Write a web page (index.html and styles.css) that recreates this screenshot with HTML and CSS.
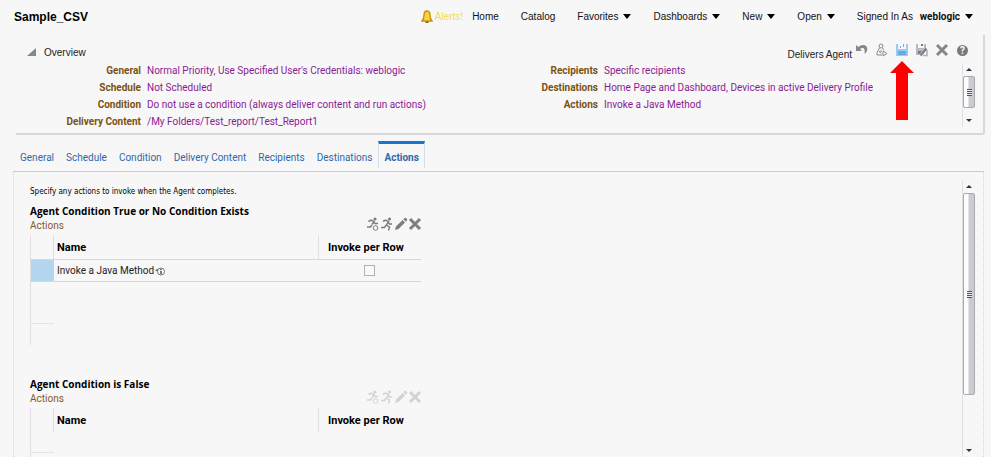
FILE: index.html
```
<!DOCTYPE html>
<html lang="en">
<head>
  <meta charset="UTF-8" />
  <meta name="viewport" content="width=device-width, initial-scale=1.0"/>
  <title>Sample_CSV</title>
  <link rel="stylesheet" href="styles.css">
</head>
<body>

  <svg class="sprite" width="0" height="0" aria-hidden="true">
    <symbol id="i-run" viewBox="0 0 14 14">
      <circle cx="9.5" cy="2" r="1.6" fill="currentColor"/>
      <path d="M3 4.5L5.5 3L8.5 4.5L6.5 8L9.5 10L8.5 13.5M8 5L9.5 7H12M6.3 8L4.5 10.5H1" fill="none" stroke="currentColor" stroke-width="1.5"/>
    </symbol>
    <symbol id="i-run-if" viewBox="0 0 14 14">
      <circle cx="9" cy="2" r="1.6" fill="currentColor"/>
      <path d="M2.5 4.5L5 3L8 4.5L6 7.5M7.5 5L9 6.5H12M5.8 8L4.5 10H1" fill="none" stroke="currentColor" stroke-width="1.5"/>
      <circle cx="9.5" cy="11" r="2.3" fill="none" stroke="currentColor"/>
    </symbol>
    <symbol id="i-edit" viewBox="0 0 14 14">
      <path d="M1 13L2 9.5L8.5 3L11 5.5L4.5 12ZM9.3 2.3L10.5 1Q11.5 .5 12.7 1.5Q13.6 2.6 13 3.5L11.8 4.8Z" fill="currentColor"/>
    </symbol>
    <symbol id="i-close" viewBox="0 0 14 14">
      <path d="M2 2L12 12M12 2L2 12" stroke="currentColor" stroke-width="3"/>
    </symbol>
  </svg>

  <header class="topbar">
    <h1>Sample_CSV</h1>
    <nav class="menu">
      <a class="alerts" href="#">
        <svg width="12" height="14" viewBox="0 0 12 14"><path d="M6 1C3.6 1 3 3 3 5.5C3 8 2.5 9.3 1 11H11C9.5 9.3 9 8 9 5.5C9 3 8.400 1 6 1Z" fill="#fbd438" stroke="#c8900c" stroke-width="1.4"/><path d="M4.500 11.500H7.500V13H4.500Z" fill="#8a5a10"/></svg>
        Alerts!
      </a>
      <a href="#">Home</a>
      <a href="#">Catalog</a>
      <button type="button" class="drop">Favorites</button>
      <button type="button" class="drop">Dashboards</button>
      <button type="button" class="drop">New</button>
      <button type="button" class="drop">Open</button>
      <span class="user">Signed In As <button type="button" class="drop">weblogic</button></span>
    </nav>
  </header>

  <section class="overview">
    <div class="overview-head">
      <h2><button type="button" class="toggle">Overview</button></h2>
      <div class="toolbar">
        <span>Delivers Agent</span>
        <button type="button" aria-label="Undo">
          <svg width="14" height="14" viewBox="0 0 14 14"><path d="M1 2V8H7L5 6C8 4 10.500 5 9.500 11C14 8 13 1.500 7.500 2Q5 2.300 3.200 4Z" fill="#85878c"/></svg>
        </button>
        <button type="button" aria-label="Run agent">
          <svg width="14" height="14" viewBox="0 0 14 14" fill="none" stroke="#85878c"><circle cx="6" cy="3" r="2"/><path d="M4.500 5L2 9.500V12H7M7.500 5L9 7M4 8L6 10.500M6 7V9"/><path d="M8 8L12 10.500L8 13Z"/></svg>
        </button>
        <button type="button" class="save" aria-label="Save">
          <svg width="14" height="14" viewBox="0 0 14 14"><path d="M1 1H3V6H11V1H13V13H1Z" fill="#9cc9ef"/><path d="M5 3H6V5H5ZM8 1H9V4H8Z" fill="#7fa9cf"/><path d="M3 8H11V12H3Z" fill="#6aaae4"/></svg>
          <svg class="pointer" width="24" height="59" viewBox="0 0 24 59"><path d="M12 0L24 12H18V59H6V12H0Z" fill="#fe0000"/></svg>
        </button>
        <button type="button" aria-label="Save as">
          <svg width="14" height="14" viewBox="0 0 14 14"><path d="M1 1H3V5H9V1H11V5L5 12H1Z" fill="#b9babd"/><path d="M6 1H8V3H6ZM3 8H7L4 11H3Z" fill="#777a80"/><path d="M5.500 12.500L11.500 5.500" stroke="#777a80" stroke-width="2"/><path d="M8 12.500H12V7" fill="none" stroke="#b0b1b5" stroke-width="1.500"/></svg>
        </button>
        <button type="button" aria-label="Close"><svg width="14" height="14"><use href="#i-close"/></svg></button>
        <button type="button" class="help" aria-label="Help">?</button>
      </div>
    </div>
    <div class="overview-body">
      <dl>
        <dt>General</dt><dd>Normal Priority, Use Specified User's Credentials: weblogic</dd>
        <dt>Schedule</dt><dd>Not Scheduled</dd>
        <dt>Condition</dt><dd>Do not use a condition (always deliver content and run actions)</dd>
        <dt>Delivery Content</dt><dd>/My Folders/Test_report/Test_Report1</dd>
      </dl>
      <dl class="second">
        <dt>Recipients</dt><dd>Specific recipients</dd>
        <dt>Destinations</dt><dd>Home Page and Dashboard, Devices in active Delivery Profile</dd>
        <dt>Actions</dt><dd>Invoke a Java Method</dd>
      </dl>
      <div class="scrollbar"><i class="up"></i><i class="thumb"></i><i class="down"></i></div>
    </div>
  </section>

  <nav class="tabs">
    <a href="#">General</a>
    <a href="#">Schedule</a>
    <a href="#">Condition</a>
    <a href="#">Delivery Content</a>
    <a href="#">Recipients</a>
    <a href="#">Destinations</a>
    <a href="#" class="active">Actions</a>
  </nav>

  <main class="panel">
    <div class="content">
      <p>Specify any actions to invoke when the Agent completes.</p>

      <section class="group">
        <h3>Agent Condition True or No Condition Exists</h3>
        <div class="group-head">
          <span>Actions</span>
          <div class="icons">
            <button type="button" aria-label="Add conditional action"><svg width="14" height="14"><use href="#i-run-if"/></svg></button>
            <button type="button" aria-label="Add action"><svg width="14" height="14"><use href="#i-run"/></svg></button>
            <button type="button" aria-label="Edit"><svg width="14" height="14"><use href="#i-edit"/></svg></button>
            <button type="button" aria-label="Delete"><svg width="14" height="14"><use href="#i-close"/></svg></button>
          </div>
        </div>
        <table>
          <thead>
            <tr><th class="mark"></th><th>Name</th><th class="per-row">Invoke per Row</th></tr>
          </thead>
          <tbody>
            <tr class="selected">
              <td class="mark"></td>
              <td>Invoke a Java Method <svg class="info" width="10" height="11" viewBox="0 0 10 11"><path d="M0 4L3 3V6Z" fill="#555b66"/><circle cx="6" cy="5.500" r="3.500" fill="#fff" stroke="#6b7180"/><path d="M6 3V4.200M6 5V8" stroke="#222" stroke-width="1.200"/></svg></td>
              <td class="check"><input type="checkbox" aria-label="Invoke per Row"></td>
            </tr>
            <tr><td class="mark"></td><td></td><td></td></tr>
            <tr><td class="mark line"></td><td></td><td></td></tr>
            <tr><td class="mark"></td><td></td><td></td></tr>
          </tbody>
        </table>
      </section>

      <section class="group">
        <h3>Agent Condition is False</h3>
        <div class="group-head">
          <span>Actions</span>
          <div class="icons">
            <button type="button" disabled aria-label="Add conditional action"><svg width="14" height="14"><use href="#i-run-if"/></svg></button>
            <button type="button" disabled aria-label="Add action"><svg width="14" height="14"><use href="#i-run"/></svg></button>
            <button type="button" disabled aria-label="Edit"><svg width="14" height="14"><use href="#i-edit"/></svg></button>
            <button type="button" disabled aria-label="Delete"><svg width="14" height="14"><use href="#i-close"/></svg></button>
          </div>
        </div>
        <table>
          <thead>
            <tr><th class="mark"></th><th>Name</th><th class="per-row">Invoke per Row</th></tr>
          </thead>
          <tbody>
            <tr><td class="mark line"></td><td></td><td></td></tr>
            <tr><td class="mark"></td><td></td><td></td></tr>
          </tbody>
        </table>
      </section>
    </div>
    <div class="scrollbar"><i class="up"></i><i class="thumb"></i><i class="down"></i></div>
  </main>

</body>
</html>
```
FILE: styles.css
```
* {
  box-sizing: border-box;
}
body {
  margin: 0;
  height: 100vh;
  display: flex;
  flex-direction: column;
  overflow: hidden;
  background: #f7f7f7;
  color: #222;
  font-family: Roboto, Arial, sans-serif;
  font-size: 10px;
  white-space: nowrap;
}
h1, h2, h3, p, dl, dd {
  margin: 0;
}
button {
  padding: 0;
  border: 0;
  background: none;
  color: inherit;
  font: inherit;
  cursor: pointer;
}
a {
  color: inherit;
  text-decoration: none;
}
svg {
  display: block;
}
.sprite {
  position: absolute;
}

.topbar {
  display: flex;
  align-items: center;
  justify-content: space-between;
  height: 33px;
  padding: 0 18px 0 14px;
  color: #111;
  font-family: "Liberation Sans", Arial, sans-serif;
}
.topbar h1 {
  font-size: 12px;
  color: #000;
}
.menu {
  display: flex;
  align-items: center;
  gap: 22px;
}
.alerts {
  display: flex;
  align-items: center;
  gap: 2px;
  margin-right: -13px;
  color: #f5dc50;
}
.drop::after {
  content: "";
  display: inline-block;
  margin-left: 5px;
  border: 4px solid transparent;
  border-top: 5px solid #000;
  border-bottom: 0;
  vertical-align: 1px;
}
.user .drop {
  margin-left: 4px;
  font-family: Roboto, Arial, sans-serif;
  font-weight: bold;
}

.overview {
  margin: 2px 6px 0 16px;
  height: 100px;
  border-right: 2px solid #d9d6df;
  border-bottom: 2px solid #d9d6df;
  border-radius: 0 0 3px 0;
}
.overview-head {
  display: flex;
  justify-content: space-between;
  height: 28px;
  padding: 6px 15px 0 11px;
}
.toggle {
  display: flex;
  align-items: center;
  height: 22px;
  font-family: "Liberation Sans", Arial, sans-serif;
  font-size: 10px;
  font-weight: normal;
}
.toggle::before {
  content: "";
  margin-right: 8px;
  border-left: 9px solid transparent;
  border-bottom: 8px solid #85888e;
}
.toolbar {
  display: flex;
  gap: 6px;
  color: #85878c;
}
.toolbar span {
  margin-right: -3px;
  color: #222;
  font-family: "Liberation Sans", Arial, sans-serif;
  line-height: 27px;
}
.toolbar button {
  height: 18px;
}
.save {
  position: relative;
}
.pointer {
  position: absolute;
  top: 20px;
  left: -5px;
}
.toolbar .help {
  width: 11px;
  height: 11px;
  margin: 4px 0 0 2px;
  border-radius: 50%;
  background: #77797f;
  color: #fff;
  font-weight: bold;
  line-height: 11px;
}
.overview-body {
  display: flex;
  height: 64px;
  padding-right: 8px;
}
.overview dl {
  flex: 1;
  display: grid;
  grid-template-columns: 125px 1fr;
  grid-auto-rows: 17px;
  column-gap: 6px;
  line-height: 16px;
}
.overview dl.second {
  grid-template-columns: 109px 1fr;
}
dt {
  color: #7a5212;
  font-weight: bold;
  text-align: right;
}
dd {
  color: #8a1a94;
}

/* scrollbars */
.scrollbar {
  display: flex;
  flex-direction: column;
  align-items: center;
  width: 13px;
  border-left: 1px solid #e4dde6;
}
.scrollbar .up,
.scrollbar .down {
  margin: 5px 0;
  border: 3px solid transparent;
}
.scrollbar .up {
  border-top: 0;
  border-bottom-color: #333;
}
.scrollbar .down {
  border-bottom: 0;
  border-top-color: #333;
  margin-top: auto;
}
.thumb {
  display: flex;
  align-items: center;
  justify-content: center;
  width: 12px;
  height: 50%;
  border: 1px solid #a9a9ad;
  border-radius: 2px;
  background: linear-gradient(to right, #fdfdfd 40%, #cbc9d1 50%);
}
.thumb::before {
  content: "";
  width: 5px;
  height: 7px;
  background: repeating-linear-gradient(#555 0 1px, #eee 1px 2px);
}

.tabs {
  display: flex;
  margin: 6px 0 0 14px;
  height: 30px;
}
.tabs a {
  height: 27px;
  padding: 0 5px;
  border: 1px solid transparent;
  border-top-width: 3px;
  border-bottom: 0;
  color: #2f68a8;
  line-height: 27px;
}
.tabs .active {
  border-color: #1a75cf #cfe0ec;
  font-weight: bold;
}

.panel {
  flex: 1;
  display: flex;
  min-height: 0;
  margin: 0 7px 0 13px;
  border: 1px dotted #d5d3da;
  border-top: 1px solid #ccc9dc;
  border-bottom: 0;
}
.content {
  flex: 1;
  overflow: hidden;
  padding: 12px 16px 0;
}
.content p {
  color: #000;
  font: 8px/15px "DejaVu Sans Condensed", "DejaVu Sans", sans-serif;
}
.panel .scrollbar {
  margin: 8px 8px 0 0;
}
.panel .thumb {
  height: 202px;
}
.group {
  width: 391px;
  margin-bottom: 32px;
}
.content p + .group {
  margin-top: 5px;
}
.group h3 {
  font: bold 10px/15px "Open Sans", sans-serif;
  color: #000;
}
.group-head {
  display: flex;
  justify-content: space-between;
  height: 16px;
  line-height: 14px;
  color: #85571c;
}
.icons {
  display: flex;
  margin: -2px -1px 0 0;
  color: #7c7e84;
}
.icons button {
  height: 14px;
}
.icons button:disabled {
  color: #d3d2d9;
}
table {
  width: 100%;
  table-layout: fixed;
  border-collapse: separate;
  border-spacing: 0;
}
th, td {
  height: 21px;
  padding: 0 3px;
  text-align: left;
}
th {
  height: 24px;
  color: #000;
  font-size: 11px;
}
.mark {
  width: 24px;
  border-left: 1px solid #e6dce8;
}
th.mark {
  border-right: 1px solid #e6dce8;
}
.line {
  border-bottom: 1px solid #e6e2e8;
}
th.per-row {
  width: 103px;
  padding-left: 9px;
  border-left: 1px solid #e6dce8;
}
.selected td {
  height: 23px;
  border-top: 1px solid #c9dbe4;
  border-bottom: 1px solid #c9dbe4;
}
.selected .mark {
  background: #b3d6ee;
}
.info {
  display: inline-block;
  margin-left: -2px;
  vertical-align: -3px;
}
.check {
  text-align: center;
}
.check input {
  appearance: none;
  display: block;
  width: 11px;
  height: 11px;
  margin: 0 auto;
  border: 1px solid #b0aec0;
  background: #fafafa;
}
```
